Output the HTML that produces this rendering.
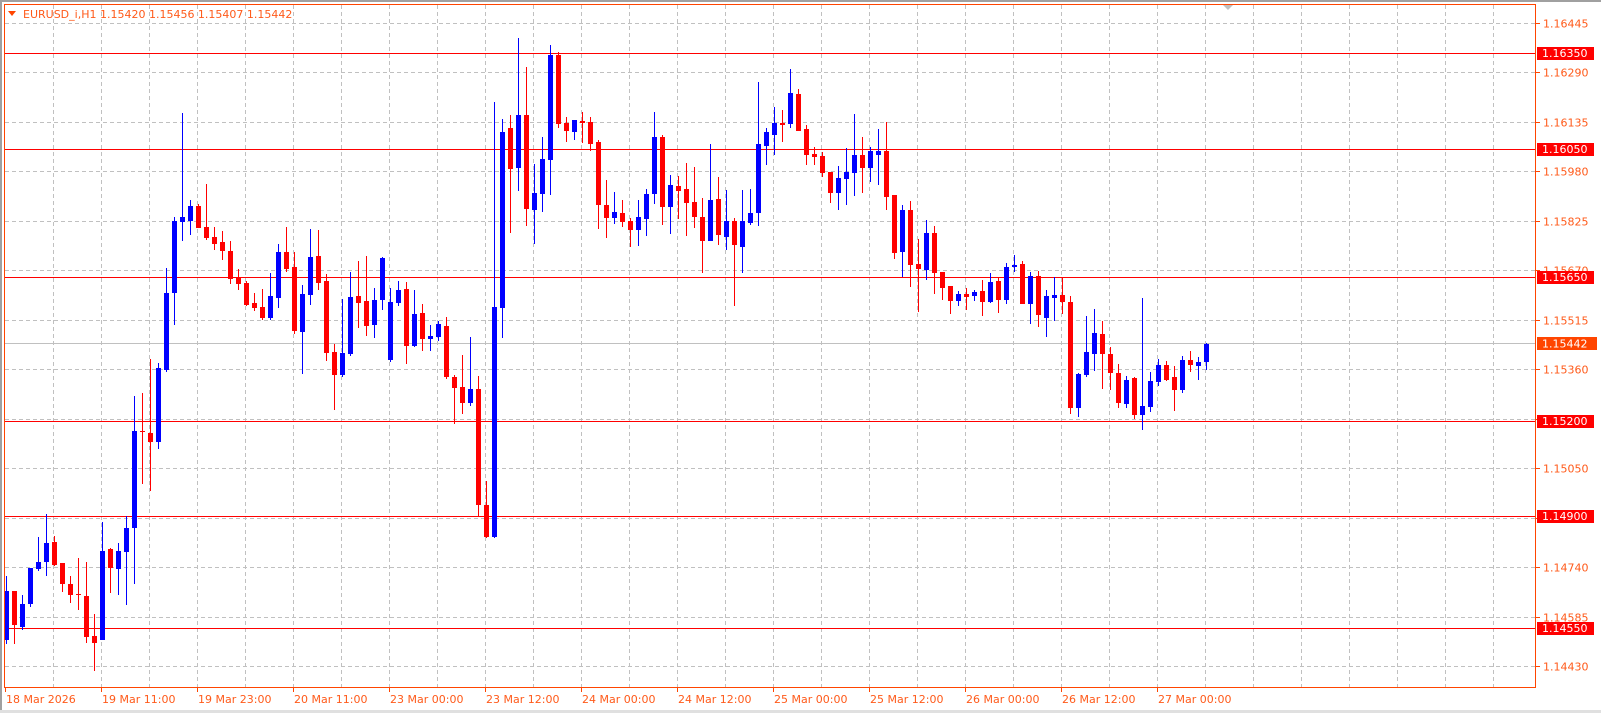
<!DOCTYPE html>
<html><head><meta charset="utf-8">
<style>
html,body{margin:0;padding:0;background:#fff;}
body{width:1601px;height:713px;overflow:hidden;position:relative;font-family:Tahoma,"DejaVu Sans","Liberation Sans",sans-serif;}
svg{position:absolute;left:0;top:0;}
</style></head>
<body>
<svg id="c" width="1601" height="713" xmlns="http://www.w3.org/2000/svg" font-family="Tahoma, 'DejaVu Sans', 'Liberation Sans', sans-serif" font-size="11"></svg>
<script>
var s=[];
function P(y,p){return 23+(1.16445-p)*31935;}
s.push('<rect x="0" y="0" width="1601" height="713" fill="#fff"/>');
s.push('<rect x="0" y="0" width="1601" height="2" fill="#a0a0a0"/>');
s.push('<rect x="0" y="0" width="2" height="713" fill="#a0a0a0"/>');
s.push('<rect x="0" y="710" width="1601" height="3" fill="#e0e0e0"/>');
for(var k=1;k<=31;k++){var x=5+48*k+0.5;s.push('<line x1="'+x+'" y1="5" x2="'+x+'" y2="687" stroke="#c0c0c0" stroke-dasharray="4,3"/>');}
var levels=[1.16445,1.16290,1.16135,1.15980,1.15825,1.15670,1.15515,1.15360,1.15205,1.15050,1.14895,1.14740,1.14585,1.14430];
levels.forEach(function(p){var y=Math.round(P(0,p))+0.5;
 s.push('<line x1="5" y1="'+y+'" x2="1535" y2="'+y+'" stroke="#c0c0c0" stroke-dasharray="4,3"/>');
 s.push('<line x1="1535" y1="'+y+'" x2="1540" y2="'+y+'" stroke="#ff4500"/>');
 s.push('<text x="1543" y="'+(y+4)+'" fill="#ff5a1a">'+p.toFixed(5)+'</text>');});
var reds=[1.16350,1.16050,1.15650,1.15200,1.14900,1.14550];
reds.forEach(function(p){var y=Math.round(P(0,p))+0.5;
 s.push('<line x1="5" y1="'+y+'" x2="1535" y2="'+y+'" stroke="#f00"/>');});
var cy=343.5;
s.push('<line x1="5" y1="'+cy+'" x2="1535" y2="'+cy+'" stroke="#c0c0c0"/>');
function z6(Y){return 100+Y/2.81;}function z7(Y){return 30+Y/3;}function z8(Y){return 40+Y/3;}function z9(Y){return 180+Y/3;}
var D=[
[z6,0,[["b",1337,1380,1518,1530],["r",1380,1380,1475,1528],["b",1392,1417,1480,1490],["b",1316,1316,1417,1425],["b",1229,1299,1318,1323],["b",1162,1246,1298,1337],["r",1226,1243,1307,1310],["r",1302,1302,1360,1382],["r",1337,1361,1390,1413],["r",1288,1389,1392,1433],["r",1299,1394,1508,1525],["r",1445,1506,1525,1604],["b",1187,1266,1518,1518],["r",1260,1263,1315,1385],["b",1246,1266,1318,1390],["b",1168,1204,1270,1418],["b",832,930,1203,1360],["r",823,930,934,1080],["r",728,935,962,1098],["b",740,753,962,982],["b",473,543,760,765],["b",328,339,542,632],["b",36,328,343,397],["b",280,297,340,378],["r",292,297,360,360],["r",235,357,388,394],["r",356,384,405,422],["r",367,400,425,450],["r",395,423,503,517],["r",476,500,517,535],["r",510,515,576,580],["r",543,571,584,593],["r",532,582,612,618],["b",487,552,612,618],["b",406,428,556,585],["r",356,428,475,482],["r",426,470,650,658]]],
[z7,37,[["b",765,792,905,1033],["b",597,681,795,825],["r",600,678,758,780],["r",733,753,968,993],["r",942,966,1034,1140],["b",807,969,1034,1040],["b",725,801,972,978],["r",692,798,818,893],["r",678,813,887,917],["b",773,810,884,923],["b",682,684,809,840],["b",773,816,990,996],["b",752,780,818,828],["r",756,777,947,1003],["b",779,852,947,950],["r",822,849,926,963],["b",885,918,926,963],["b",874,882,920,933],["r",860,888,1041,1047],["r",1035,1041,1073,1181],["r",975,1071,1118,1151],["b",920,1077,1118,1128],["r",1038,1077,1424,1460],["r",1352,1424,1520,1525],["b",215,831,1520,1525],["b",268,306,833,923],["r",255,294,416,608],["b",23,255,413,482],["r",111,255,537,587],["b",402,489,540,641],["b",321,387,491,545],["b",45,75,389,494],["r",67,75,282,293],["r",262,279,302,335],["b",270,270,305,330],["r",246,272,278,340],["r",262,276,341,362]]],
[z8,74,[["r",300,306,494,566],["r",420,495,533,593],["b",456,516,533,551],["r",480,519,545,560],["r",533,543,569,620],["b",480,531,569,617],["b",447,462,536,587],["b",216,291,461,491],["r",285,291,500,554],["b",405,435,500,581],["r",408,438,452,537],["r",369,447,488,587],["r",381,486,530,563],["r",474,531,602,698],["b",312,480,602,602],["r",411,477,584,614],["b",450,543,590,629],["r",534,543,614,797],["b",450,543,620,698],["b",447,519,548,554],["b",126,312,518,557],["b",264,276,317,374],["b",201,249,284,345],["r",210,249,254,305],["b",87,159,251,263],["r",147,162,272,272],["r",255,267,344,374],["r",321,342,350,374],["r",336,348,398,410],["r",396,396,458,488],["b",378,414,458,509],["b",324,396,416,494],["b",222,345,398,467],["r",291,345,383,458],["b",321,333,383,425],["b",267,333,344,434],["r",246,333,470,509]]],
[z9,111,[["r",45,45,218,237],["b",75,90,215,292],["r",63,90,255,321],["r",177,252,267,396],["b",120,159,269,299],["r",138,159,279,342],["r",276,276,323,360],["r",318,318,362,402],["b",333,342,362,378],["r",324,342,350,390],["b",330,336,348,362],["r",300,333,366,408],["b",279,306,366,369],["r",294,303,359,399],["b",249,261,359,372],["b",225,255,261,276],["r",243,252,372,372],["b",276,288,372,432],["r",273,288,405,441],["b",330,348,414,470],["b",292,345,353,423],["r",292,345,366,402],["r",348,366,684,702],["b",578,582,684,711],["b",408,516,585,591],["b",387,459,522,573],["r",423,462,522,627],["r",501,522,578,630],["r",552,579,669,684],["b",588,600,672,684],["r",591,594,705,717],["b",354,678,705,750],["b",576,603,681,696],["b",537,555,606,618],["r",543,555,600,603],["r",558,591,630,693],["b",528,540,630,639],["r",513,540,555,576],["b",531,546,558,600],["b",488,492,546,570]]]
];
D.forEach(function(g){var f=g[0],st=g[1];g[2].forEach(function(c,j){var i=st+j;var col=c[0]=="b"?"#0000ff":"#ff0000";
 var h=Math.round(f(c[1])),t=Math.round(f(c[2])),b=Math.round(f(c[3])),l=Math.round(f(c[4]));
 if(b-t<1)b=t+1;var cx=6+8*i;
 s.push('<rect x="'+cx+'" y="'+h+'" width="1" height="'+Math.max(1,l-h)+'" fill="'+col+'"/>');
 var bx=Math.max(4,cx-2);
 s.push('<rect x="'+bx+'" y="'+t+'" width="'+(cx+3-bx)+'" height="'+(b-t)+'" fill="'+col+'"/>');});});
s.push('<rect x="4.5" y="4.5" width="1531" height="683" fill="none" stroke="#ff4500"/>');
reds.forEach(function(p){var y=Math.round(P(0,p));
 s.push('<rect x="1537" y="'+(y-6)+'" width="57" height="13" fill="#ff0000"/>');
 s.push('<text x="1542" y="'+(y+4)+'" fill="#fff">'+p.toFixed(5)+'</text>');});
s.push('<rect x="1537" y="'+(cy-6.5)+'" width="60" height="13" fill="#ff4500"/>');
s.push('<text x="1542" y="'+(cy+4)+'" fill="#fff">1.15442</text>');
var dates=["18 Mar 2026","19 Mar 11:00","19 Mar 23:00","20 Mar 11:00","23 Mar 00:00","23 Mar 12:00","24 Mar 00:00","24 Mar 12:00","25 Mar 00:00","25 Mar 12:00","26 Mar 00:00","26 Mar 12:00","27 Mar 00:00"];
dates.forEach(function(d,k){var x=5+96*k;
 s.push('<line x1="'+(x+0.5)+'" y1="687" x2="'+(x+0.5)+'" y2="692" stroke="#ff4500"/>');
 s.push('<text x="'+(x+1)+'" y="703" fill="#ff5a1a">'+d+'</text>');});
s.push('<polygon points="8,11 16,11 12,16" fill="#ff4500"/>');
s.push('<text x="23" y="18" fill="#ff5a1a">EURUSD_i,H1  1.15420 1.15456 1.15407 1.15442</text>');
s.push('<polygon points="1223,5 1233,5 1228,10" fill="#c0c0c0"/>');
document.getElementById('c').innerHTML=s.join('');
</script>
</body></html>
